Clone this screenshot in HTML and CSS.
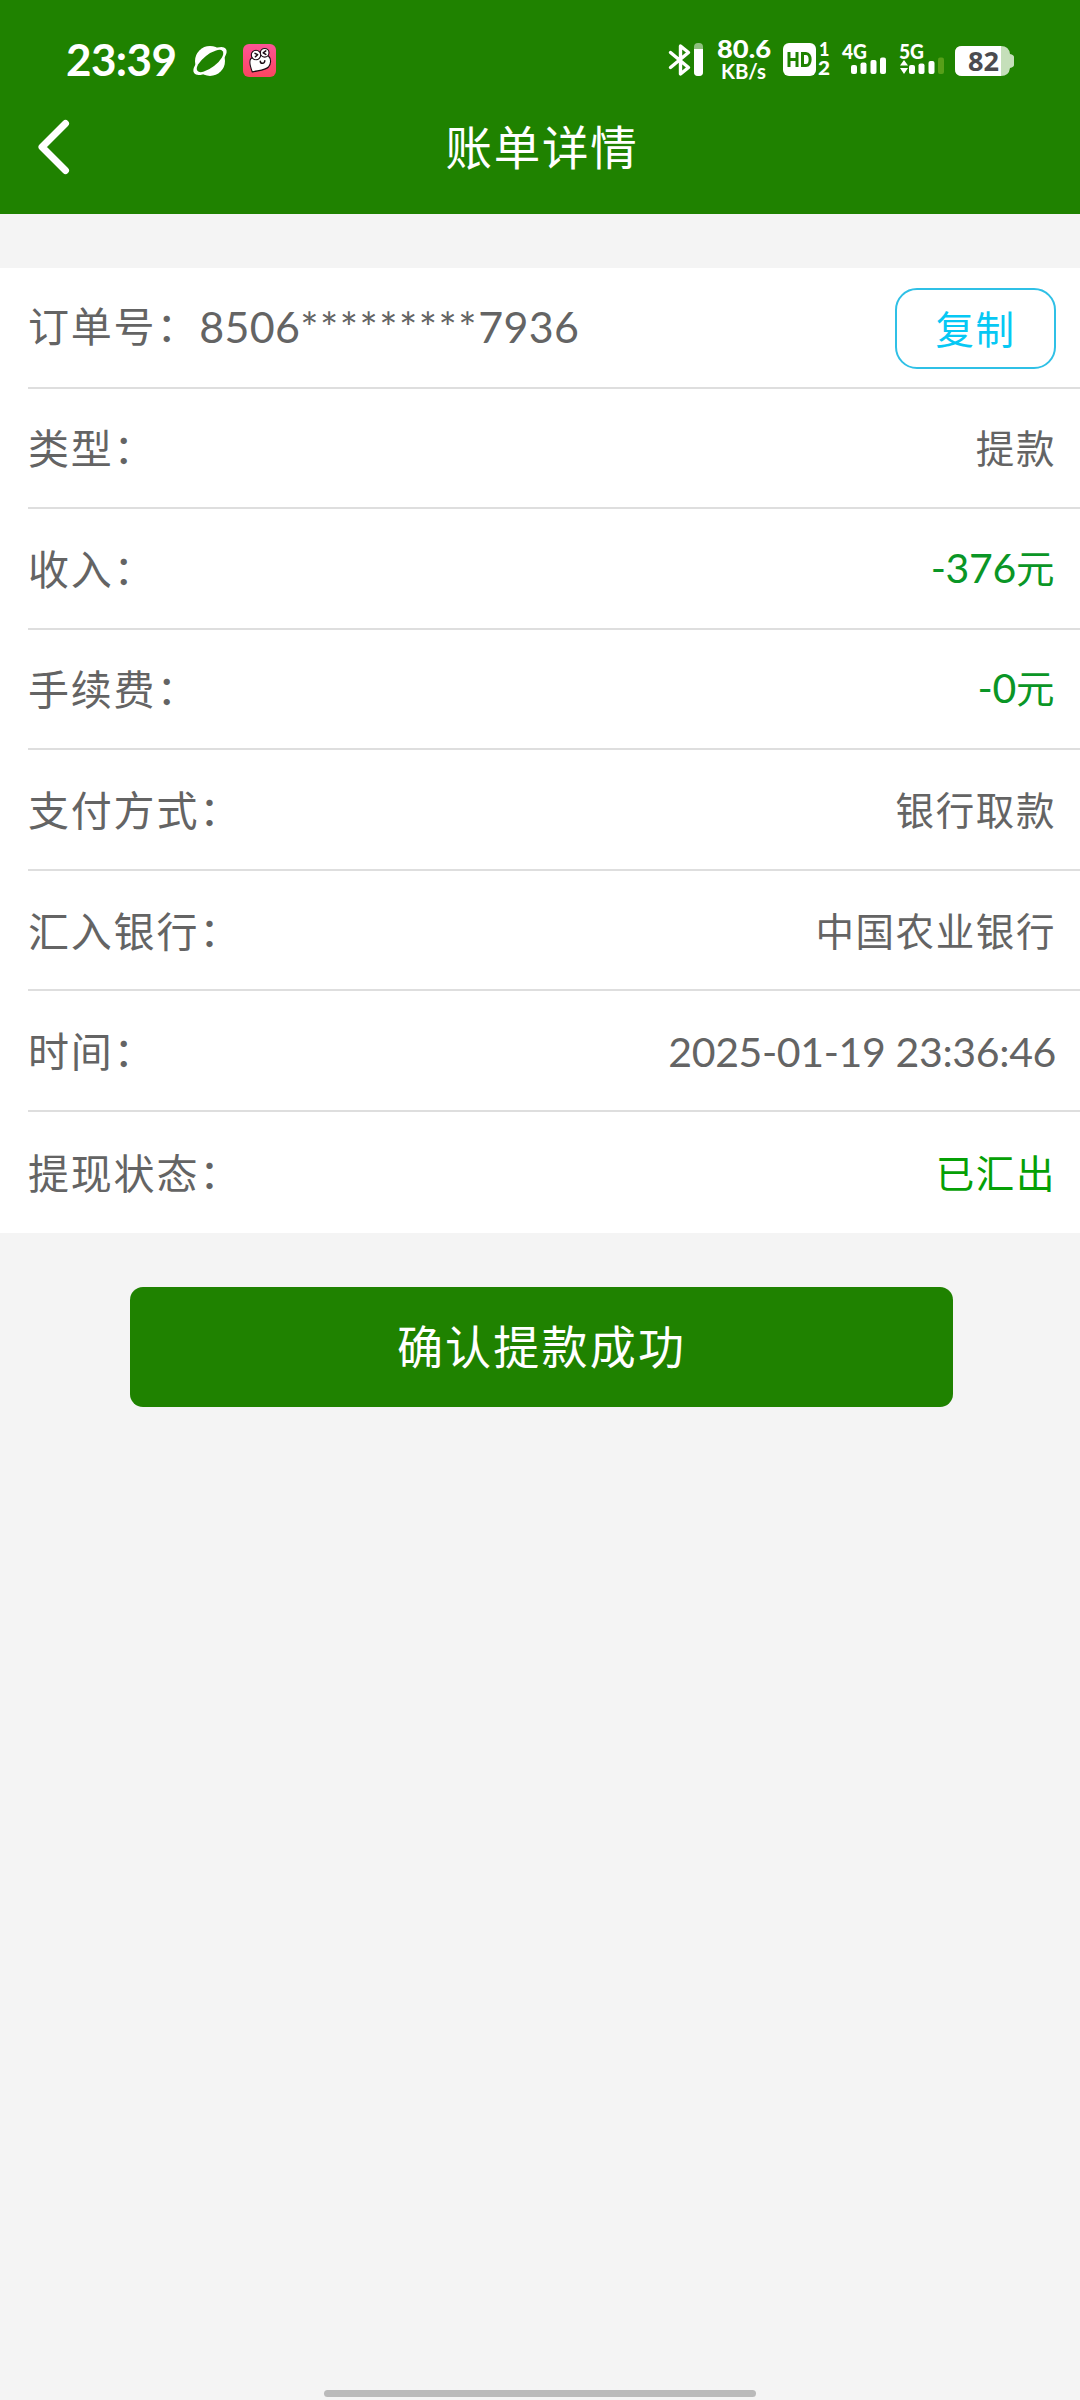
FILE: index.html
```html
<!DOCTYPE html>
<html lang="zh-CN">
<head>
<meta charset="utf-8">
<title>账单详情</title>
<link rel="stylesheet" href="styles.css">
</head>
<body>
<div class="screen">
  <header class="header">
    <div class="status">
      <span class="clock">23:39</span>
      <svg class="planet" width="34" height="32" viewBox="0 0 34 32">
        <circle cx="17" cy="16" r="15" fill="#fff"/>
        <ellipse cx="17" cy="16" rx="20" ry="8.500" transform="rotate(-38 17 16)" fill="#fff"/>
        <ellipse cx="17" cy="16" rx="16" ry="6.500" transform="rotate(-38 17 16)" fill="#1f8200"/>
      </svg>
      <svg class="app" width="33" height="33" viewBox="0 0 33 33">
        <defs><linearGradient id="pink" x1="0" y1="0" x2="0" y2="1"><stop offset="0" stop-color="#fc5596"/><stop offset="1" stop-color="#fb4560"/></linearGradient></defs>
        <rect width="33" height="33" rx="6" fill="url(#pink)"/>
        <g fill="#fff" stroke="#1c0c14" stroke-width="1.1" stroke-linejoin="round" stroke-linecap="round">
          <path d="M9.3 28 C7 22 5.5 17 8 14.5 C12 11 22 9 25.5 12 C28.5 15 28 20 25.5 23 C22 26.5 14 26.5 9.3 28Z"/>
          <circle cx="13" cy="11" r="4.7"/>
          <circle cx="21.7" cy="8.8" r="4.3"/>
          <path fill="none" stroke-width="1.5" d="M12 9.3 14.6 10.7 12.4 12.8M22.8 6.9 20.2 8.8 22.8 10.4M17.3 17.3C17.6 20.2 21.6 20 21.8 16.7"/>
        </g>
      </svg>
      <svg class="bluetooth" width="36" height="34" viewBox="0 0 36 34">
        <path d="M2.5 9.5 20.5 24.5 12.5 31V3L20.5 9.5 2.5 24.5" fill="none" stroke="#fff" stroke-width="3.4" stroke-linejoin="round" stroke-linecap="round"/>
        <rect x="26" y="0" width="9" height="33" rx="4" fill="#8fc07f"/>
        <path d="M26 6h9v23a4 4 0 0 1-4 4h-1a4 4 0 0 1-4-4z" fill="#fff"/>
      </svg>
      <svg class="speed" width="54" height="44" viewBox="0 0 54 44">
        <text class="rate" x="0" y="20" textLength="54" lengthAdjust="spacingAndGlyphs">80.6</text>
        <text class="unit" x="4" y="41" textLength="45" lengthAdjust="spacingAndGlyphs">KB/s</text>
      </svg>
      <svg class="hd" width="48" height="34" viewBox="0 0 48 34">
        <rect x="0" y="0" width="33" height="33" rx="6" fill="#fff"/>
        <path d="M6 9v15M14 9v15M6 16.5h8M19.500 10.5h3.5c5.500 0 5.500 12 0 12h-3.500z" fill="none" stroke="#1f8200" stroke-width="3"/>
        <text class="sim" x="36" y="13">1</text>
        <text class="sim" x="35" y="32" textLength="12" lengthAdjust="spacingAndGlyphs">2</text>
      </svg>
      <svg class="signal four" width="46" height="34" viewBox="0 0 46 34">
        <text class="net" x="0" y="16" textLength="25" lengthAdjust="spacingAndGlyphs">4G</text>
        <g fill="#fff"><rect x="9" y="22" width="6" height="9" rx="2"/><rect x="18.5" y="19.500" width="6" height="11.500" rx="2"/><rect x="28.500" y="17" width="6" height="14" rx="2"/><rect x="38" y="14.500" width="6" height="16.500" rx="2"/></g>
      </svg>
      <svg class="signal five" width="46" height="34" viewBox="0 0 46 34">
        <text class="net" x="-1" y="16" textLength="25" lengthAdjust="spacingAndGlyphs">5G</text>
        <path d="M4 17 8 22.500H0zM0 25h8L4 31z" fill="#fff"/>
        <g fill="#fff"><rect x="9" y="22" width="6" height="9" rx="2"/><rect x="18.500" y="20.500" width="6" height="10.500" rx="2"/><rect x="28.500" y="18" width="6" height="13" rx="2"/><rect x="38" y="14.500" width="6" height="16.500" rx="2" fill="#579f19"/></g>
      </svg>
      <svg class="battery" width="60" height="30" viewBox="0 0 60 30">
        <path d="M7 0H46Q54 0 55 8q4 1 4 3v8q0 2-4 3Q54 30 46 30H7Q0 30 0 23V7Q0 0 7 0Z" fill="#c5dfba"/>
        <path d="M7 0H46V30H7Q0 30 0 23V7Q0 0 7 0Z" fill="#fff"/>
        <text class="level" x="13" y="25" textLength="31" lengthAdjust="spacingAndGlyphs">82</text>
      </svg>
    </div>
    <div class="nav">
      <svg class="back" width="34" height="56" viewBox="0 0 34 56"><path d="M29.500 4.500 6 28 29.500 51.500" fill="none" stroke="#fff" stroke-width="7" stroke-linecap="round" stroke-linejoin="round"/></svg>
      <h1 class="title">账单详情</h1>
    </div>
  </header>

  <main>
    <section class="details">
      <div class="row"><span class="label">订单号：<span class="order">8506<span class="mask">*********</span>7936</span></span><button class="copy">复制</button></div>
      <div class="row"><span class="label">类型：</span><span class="value">提款</span></div>
      <div class="row"><span class="label">收入：</span><span class="value amount"><span class="num">-376</span>元</span></div>
      <div class="row"><span class="label">手续费：</span><span class="value amount"><span class="num">-0</span>元</span></div>
      <div class="row"><span class="label">支付方式：</span><span class="value">银行取款</span></div>
      <div class="row"><span class="label">汇入银行：</span><span class="value">中国农业银行</span></div>
      <div class="row"><span class="label">时间：</span><span class="value date">2025-01-19 23:36:46</span></div>
      <div class="row"><span class="label">提现状态：</span><span class="value done">已汇出</span></div>
    </section>
    <button class="confirm">确认提款成功</button>
  </main>
  <div class="home-bar"></div>
</div>
</body>
</html>
```
FILE: styles.css
```css
* { box-sizing: border-box; }

body {
  margin: 0;
  font-family: "Noto Sans CJK SC", sans-serif;
  color: #646464;
}

button {
  padding: 0;
  border: 0;
  font: inherit;
}

.screen {
  display: flex;
  flex-direction: column;
  width: 1080px;
  height: 2400px;
  background: #f4f4f4;
}

.header {
  height: 214px;
  padding-top: 30px;
  background: #1f8200;
  color: #fff;
}

.status {
  display: flex;
  align-items: center;
  height: 60px;
  padding-left: 66px;
}

.status svg {
  flex: none;
  overflow: visible;
}

.clock {
  width: 127px;
  padding-bottom: 3px;
  font: 700 44px/60px Lato, sans-serif;
  letter-spacing: -0.600px;
  white-space: nowrap;
}

.planet { margin-top: 2px; }
.app { margin-left: 16px; }
.bluetooth { margin-left: 392px; }
.speed { margin-left: 13px; }
.rate { font: 900 25px Lato, sans-serif; fill: #fff; }
.unit { font: 700 21px Lato, sans-serif; fill: #fff; }
.hd { margin-left: 12px; }
.sim { font: 900 18px Lato, sans-serif; fill: #fff; }
.net { font: 900 20px Lato, sans-serif; fill: #fff; }
.four { margin-left: 11px; }
.five { margin-left: 12px; }
.battery { margin: 2px 0 0 9px; }
.level { font: 700 27px "Noto Sans", sans-serif; fill: #4b4b4f; }

.nav {
  display: grid;
  grid-template-columns: 74px 1fr 70px;
  align-items: center;
  height: 114px;
}

.back { margin-left: 36px; }

.title {
  margin: 0;
  padding-bottom: 5px;
  font-size: 46.500px;
  font-weight: 400;
  letter-spacing: 1.800px;
  line-height: 60px;
  text-align: center;
}

.details {
  margin-top: 54px;
  height: 964.500px;
  padding-left: 28px;
  background: #fff;
}

.row {
  display: flex;
  align-items: center;
  justify-content: space-between;
  height: 120.560px;
  padding-right: 24px;
  border-bottom: 2px solid #dedede;
}

.row:last-child { border-bottom: 0; }

.label {
  padding-bottom: 3px;
  font-size: 41px;
  letter-spacing: 1.800px;
  line-height: 60px;
  white-space: nowrap;
}

.order {
  font-family: Lato, sans-serif;
  font-size: 43px;
  letter-spacing: 0.300px;
  vertical-align: -1px;
}

.mask { letter-spacing: 1.500px; }

.value {
  padding-bottom: 3px;
  font-size: 38.500px;
  letter-spacing: 1.600px;
  line-height: 60px;
}

.amount { color: #0a9626; }

.num, .date {
  font-family: Lato, sans-serif;
  font-size: 41px;
  letter-spacing: -0.350px;
}

.date { padding: 2px 0 0; }

.done { color: #05a005; }

.copy {
  width: 161px;
  height: 81px;
  margin-top: 2px;
  padding-bottom: 3px;
  border: 2px solid #2fc0e6;
  border-radius: 22px;
  background: #fff;
  color: #06c8f4;
  font-size: 38.500px;
  letter-spacing: 1.600px;
}

.confirm {
  display: block;
  width: 823px;
  height: 120px;
  margin: 54px 0 0 130px;
  padding-bottom: 6px;
  border-radius: 13px;
  background: #1f8200;
  color: #fff;
  font-size: 46px;
  letter-spacing: 2.200px;
}

.home-bar {
  width: 432px;
  height: 7px;
  margin: auto auto 3px;
  border-radius: 4px;
  background: #bababa;
}
```
